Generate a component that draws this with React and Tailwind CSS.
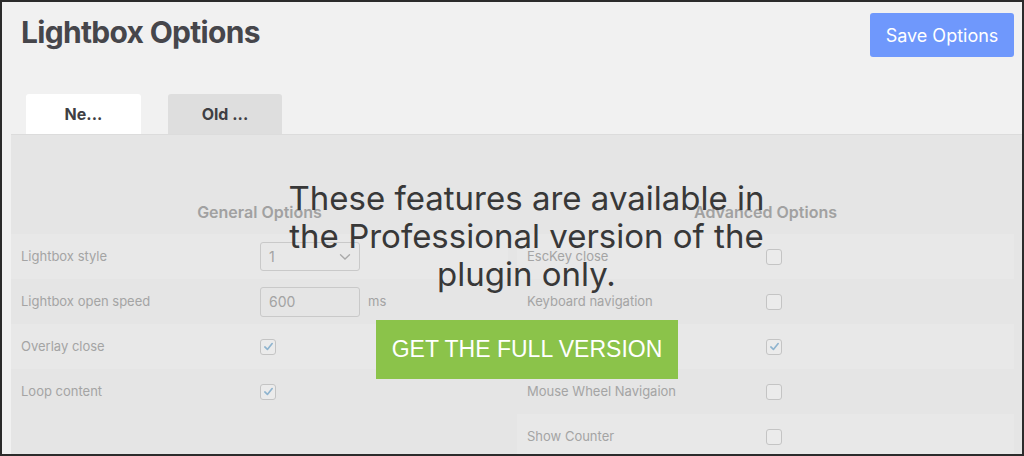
import React from 'react';

const generalRows = [
  { label: 'Lightbox style', control: 'select' },
  { label: 'Lightbox open speed', control: 'input' },
  { label: 'Overlay close', control: 'check', checked: true },
  { label: 'Loop content', control: 'check', checked: true },
];

const advancedRows = [
  { label: 'EscKey close', checked: false },
  { label: 'Keyboard navigation', checked: false },
  { label: 'Overlay close', checked: true },
  { label: 'Mouse Wheel Navigaion', checked: false },
  { label: 'Show Counter', checked: false },
];

const Checkbox = ({ checked }) => (
  <span className="w-4 h-4 rounded-[3px] border border-[#c4c4c4] bg-[#ebebeb] flex items-center justify-center">
    {checked && (
      <svg width="11" height="11" viewBox="0 0 12 12" fill="none">
        <path d="M2 6.5 L4.8 9.2 L10 2.8" stroke="#8fb4cf" strokeWidth="1.8" strokeLinecap="round" strokeLinejoin="round" />
      </svg>
    )}
  </span>
);

const Control = ({ row }) => {
  if (row.control === 'select') {
    return (
      <div className="w-[100px] h-[29px] border border-[#c9c9c9] rounded-[3px] flex items-center justify-between px-2 text-[14px] text-[#a3a3a3]">
        <span>1</span>
        <svg width="12" height="8" viewBox="0 0 12 8" fill="none">
          <path d="M1.5 1.8 L6 6 L10.5 1.8" stroke="#a8a8a8" strokeWidth="1.3" strokeLinecap="round" />
        </svg>
      </div>
    );
  }
  if (row.control === 'input') {
    return (
      <div className="flex items-center gap-2">
        <div className="w-[100px] h-[30px] border border-[#c9c9c9] rounded-[3px] flex items-center px-2 text-[14px] text-[#a3a3a3]">
          600
        </div>
        <span className="text-[13px] text-[#a3a3a3]">ms</span>
      </div>
    );
  }
  return <Checkbox checked={row.checked} />;
};

const OptionTable = ({ title, children }) => (
  <div className="w-[497px]">
    <div className="h-[99px] flex items-end justify-center pb-[10px] text-[16px] font-semibold text-[#a1a1a1]">
      {title}
    </div>
    {children}
  </div>
);

export default function App() {
  return (
    <div
      className="w-[1024px] h-[456px] box-border border-2 border-[#2b2b2b] bg-[#f1f1f1] overflow-hidden flex flex-col"
      style={{ fontFamily: 'Inter, "Noto Sans", sans-serif' }}
    >
      {/* Header */}
      <div className="flex items-start justify-between pl-[19px] pr-[8px] pt-[11px]">
        <h1 className="text-[30px] leading-[36px] font-bold tracking-[-0.7px] text-[#46464b] mt-[1px]">
          Lightbox Options
        </h1>
        <button className="w-[144px] h-[44px] rounded-[3px] bg-[#6f98fc] text-white text-[18px]">
          Save Options
        </button>
      </div>

      {/* Tabs */}
      <div className="flex gap-[27px] pl-[24px] mt-[37px]">
        <div className="w-[115px] h-[40px] bg-white rounded-t-[3px] flex items-center justify-center text-[16px] font-bold text-[#3f3f44]">
          Ne...
        </div>
        <div className="w-[114px] h-[40px] bg-[#dedede] rounded-t-[3px] flex items-center justify-center text-[16px] font-bold text-[#3f3f44]">
          Old ...
        </div>
      </div>

      {/* Panel */}
      <div className="relative flex-1 ml-[9px] bg-[#e5e5e5] border-t border-[#dcdcdc]">
        <div className="flex gap-[9px]">
          <OptionTable title="General Options">
            {generalRows.map((row, i) => (
              <div
                key={row.label}
                className={`h-[45px] flex items-center ${i % 2 === 0 ? 'bg-[#e8e8e8]' : ''}`}
              >
                <span className="w-[249px] pl-[10px] text-[13px] text-[#a4a4a4]">{row.label}</span>
                <Control row={row} />
              </div>
            ))}
          </OptionTable>
          <OptionTable title="Advanced Options">
            {advancedRows.map((row, i) => (
              <div
                key={row.label}
                className={`h-[45px] flex items-center ${i % 2 === 0 ? 'bg-[#e8e8e8]' : ''}`}
              >
                <span className="w-[249px] pl-[10px] text-[13px] text-[#a4a4a4]">{row.label}</span>
                <Checkbox checked={row.checked} />
              </div>
            ))}
          </OptionTable>
        </div>

        {/* Pro overlay */}
        <div className="absolute inset-0 flex flex-col items-center pt-[44px]">
          <p className="ml-[20px] text-center text-[33px] leading-[38px] text-[#383838] whitespace-nowrap">
            These features are available in
            <br />
            the Professional version of the
            <br />
            plugin only.
          </p>
          <button
            className="mt-[27px] ml-[21px] w-[302px] h-[59px] bg-[#8bc34a] text-white text-[23px]"
            style={{ fontFamily: '"Liberation Sans", Arial, sans-serif' }}
          >
            GET THE FULL VERSION
          </button>
        </div>
      </div>
    </div>
  );
}
